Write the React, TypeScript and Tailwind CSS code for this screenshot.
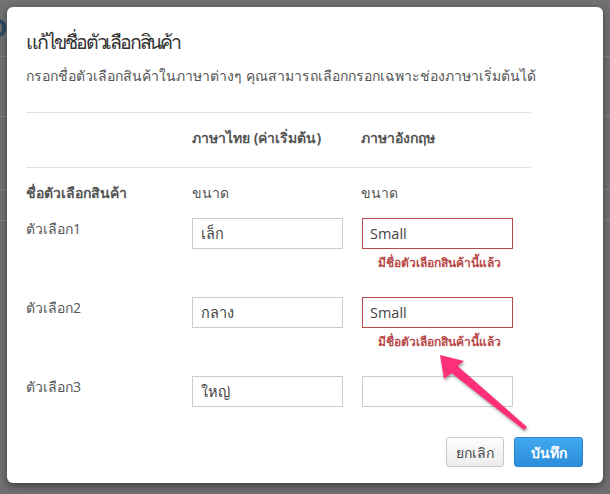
import React from "react";

const font = { fontFamily: '"Open Sans", "Noto Sans", "Liberation Sans", sans-serif' };

function Row({
  label,
  th,
  en,
  error,
}: {
  label: string;
  th: string;
  en: string;
  error?: boolean;
}) {
  return (
    <div className="grid h-[79px] grid-cols-[166px_169px_170px] items-start">
      <div className="pt-[1px] text-[14px] leading-[20px] text-[#555]">{label}</div>
      <div>
        <div className="flex h-[31px] w-[151px] items-center border border-[#ccc] bg-white pl-[8px] text-[14.5px] text-[#444]">
          {th}
        </div>
      </div>
      <div className="pl-[1px]">
        <div
          className={
            error
              ? "flex h-[31px] w-[151px] items-center border border-[#b94a48] bg-white pl-[7px] text-[14.5px] text-[#444]"
              : "flex h-[31px] w-[151px] items-center border border-[#ccc] bg-white pl-[7px] text-[14.5px] text-[#444]"
          }
        >
          {en}
        </div>
        {error && (
          <div className="mt-[5px] w-[151px] pl-[16px] text-[12px] font-semibold leading-[18px] text-[#b94a48]">
            มีชื่อตัวเลือกสินค้านี้แล้ว
          </div>
        )}
      </div>
    </div>
  );
}

export default function App() {
  return (
    <div className="relative h-[494px] w-[610px] overflow-hidden bg-[#717171]" style={font}>
      {/* dimmed page behind */}
      <div className="flex flex-col">
        <div className="flex h-[57px] items-center border-b border-[#858585]">
          <div className="ml-[-10px] h-[18px] w-[16px] rounded-full border-[4px] border-[#2d4a66]" />
        </div>
        <div className="h-[60px] border-b border-[#858585]" />
        <div className="h-[73px] border-b border-[#858585]" />
        <div className="h-[31px] border-b border-[#858585]" />
      </div>

      {/* modal */}
      <div className="absolute left-[7px] top-[7px] flex h-[476px] w-[596px] flex-col rounded-[6px] bg-white pl-[19px] shadow-[0_3px_8px_rgba(0,0,0,0.45)]">
        <div className="pt-[21px] text-[19.5px] leading-[28px] tracking-[-2.2px] text-[#333]">แก้ไขชื่อตัวเลือกสินค้า</div>
        <div className="mt-[10px] text-[14px] leading-[20px] text-[#555]">
          กรอกชื่อตัวเลือกสินค้าในภาษาต่างๆ คุณสามารถเลือกกรอกเฉพาะช่องภาษาเริ่มต้นได้
        </div>

        <div className="mt-[26px] w-[505px] border-t border-[#e2e2e2]">
          <div className="grid h-[55px] grid-cols-[166px_169px_170px] border-b border-[#e2e2e2] pt-[15px] text-[14px] font-bold leading-[20px] text-[#555]">
            <div />
            <div>ภาษาไทย (ค่าเริ่มต้น)</div>
            <div>ภาษาอังกฤษ</div>
          </div>
          <div className="grid grid-cols-[166px_169px_170px] pb-[15px] pt-[15px] text-[14px] leading-[20px] text-[#555]">
            <div className="font-bold">ชื่อตัวเลือกสินค้า</div>
            <div>ขนาด</div>
            <div>ขนาด</div>
          </div>
          <Row label="ตัวเลือก1" th="เล็ก" en="Small" error />
          <Row label="ตัวเลือก2" th="กลาง" en="Small" error />
          <div className="h-[61px]">
            <Row label="ตัวเลือก3" th="ใหญ่" en="" />
          </div>
        </div>

        <div className="flex justify-end gap-[10px] pr-[20px]">
          <button className="h-[30px] w-[58px] rounded-[3px] border border-[#c8c8c8] bg-gradient-to-b from-[#fdfdfd] to-[#ececec] text-[14px] text-[#444]">
            ยกเลิก
          </button>
          <button className="h-[30px] w-[69px] rounded-[3px] border border-[#2c86cf] bg-gradient-to-b from-[#41a9f0] to-[#2c8ddb] text-[14px] font-semibold text-white">
            บันทึก
          </button>
        </div>
      </div>

      {/* annotation arrow */}
      <svg
        className="absolute left-0 top-0 drop-shadow-[1px_2px_1.5px_rgba(0,0,0,0.35)]"
        width="610"
        height="494"
        viewBox="0 0 610 494"
      >
        <polygon
          points="440,355 464,361 457.5,366 527,427 524,430 451.5,373 444,379"
          fill="#ff2e78"
        />
      </svg>
    </div>
  );
}
